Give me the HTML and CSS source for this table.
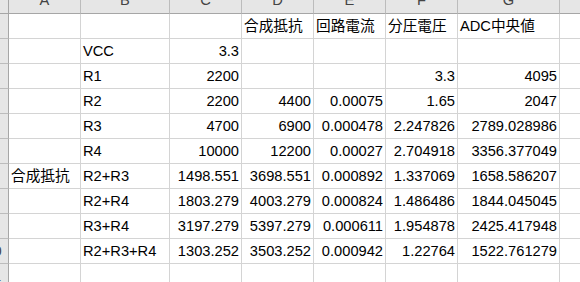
FILE: index.html
```html
<!DOCTYPE html>
<html lang="ja">
<head>
<meta charset="utf-8">
<title>Sheet</title>
<link rel="stylesheet" href="styles.css">
</head>
<body>
<div class="sheet">
  <div class="corner"></div>
  <div class="h">A</div><div class="h">B</div><div class="h">C</div><div class="h">D</div><div class="h">E</div><div class="h">F</div><div class="h">G</div><div class="h">H</div>

  <div class="r">1</div>
  <div class="c"></div><div class="c"></div><div class="c"></div><div class="c">合成抵抗</div><div class="c">回路電流</div><div class="c">分圧電圧</div><div class="c">ADC中央値</div><div class="c"></div>

  <div class="r">2</div>
  <div class="c"></div><div class="c">VCC</div><div class="c n">3.3</div><div class="c"></div><div class="c"></div><div class="c"></div><div class="c"></div><div class="c"></div>

  <div class="r">3</div>
  <div class="c"></div><div class="c">R1</div><div class="c n">2200</div><div class="c"></div><div class="c"></div><div class="c n">3.3</div><div class="c n">4095</div><div class="c"></div>

  <div class="r">4</div>
  <div class="c"></div><div class="c">R2</div><div class="c n">2200</div><div class="c n">4400</div><div class="c n">0.00075</div><div class="c n">1.65</div><div class="c n">2047</div><div class="c"></div>

  <div class="r">5</div>
  <div class="c"></div><div class="c">R3</div><div class="c n">4700</div><div class="c n">6900</div><div class="c n">0.000478</div><div class="c n">2.247826</div><div class="c n">2789.028986</div><div class="c"></div>

  <div class="r">6</div>
  <div class="c"></div><div class="c">R4</div><div class="c n">10000</div><div class="c n">12200</div><div class="c n">0.00027</div><div class="c n">2.704918</div><div class="c n">3356.377049</div><div class="c"></div>

  <div class="r">7</div>
  <div class="c">合成抵抗</div><div class="c">R2+R3</div><div class="c n">1498.551</div><div class="c n">3698.551</div><div class="c n">0.000892</div><div class="c n">1.337069</div><div class="c n">1658.586207</div><div class="c"></div>

  <div class="r">8</div>
  <div class="c"></div><div class="c">R2+R4</div><div class="c n">1803.279</div><div class="c n">4003.279</div><div class="c n">0.000824</div><div class="c n">1.486486</div><div class="c n">1844.045045</div><div class="c"></div>

  <div class="r">9</div>
  <div class="c"></div><div class="c">R3+R4</div><div class="c n">3197.279</div><div class="c n">5397.279</div><div class="c n">0.000611</div><div class="c n">1.954878</div><div class="c n">2425.417948</div><div class="c"></div>

  <div class="r">10</div>
  <div class="c"></div><div class="c">R2+R3+R4</div><div class="c n">1303.252</div><div class="c n">3503.252</div><div class="c n">0.000942</div><div class="c n">1.22764</div><div class="c n">1522.761279</div><div class="c"></div>

  <div class="r">11</div>
  <div class="c"></div><div class="c"></div><div class="c"></div><div class="c"></div><div class="c"></div><div class="c"></div><div class="c"></div><div class="c"></div>
</div>
</body>
</html>
```

FILE: styles.css
```css
html, body {
  margin: 0;
  padding: 0;
  background: #ffffff;
  overflow: hidden;
  width: 580px;
  height: 282px;
}

.sheet {
  display: grid;
  grid-template-columns: 30px 72px 89px 72px 72px 72px 72px 102px 72px;
  grid-template-rows: 21px;
  grid-auto-rows: 25px;
  margin: -7px 0 0 -21px;
  font-family: "Liberation Sans", "Noto Sans CJK JP", sans-serif;
  font-size: 14.67px;
  line-height: 17px;
  color: #000;
}

.corner,
.h,
.r,
.c {
  box-sizing: border-box;
  display: flex;
  align-items: flex-end;
  white-space: nowrap;
  overflow: hidden;
}

.corner {
  background: #e6e6e6;
  border-right: 1px solid #a6a6a6;
  border-bottom: 1px solid #a6a6a6;
}

.h {
  background: #e6e6e6;
  border-right: 1px solid #bcbcbc;
  border-bottom: 1px solid #a6a6a6;
  justify-content: center;
  padding-bottom: 4px;
  color: #444;
}

.r {
  background: #e6e6e6;
  border-right: 1px solid #a6a6a6;
  border-bottom: 1px solid #bcbcbc;
  justify-content: center;
  padding-bottom: 3px;
  color: #444;
}

.c {
  border-right: 1px solid #d4d4d4;
  border-bottom: 1px solid #d4d4d4;
  padding: 0 2px 3px 2px;
}

.n {
  justify-content: flex-end;
}
```
